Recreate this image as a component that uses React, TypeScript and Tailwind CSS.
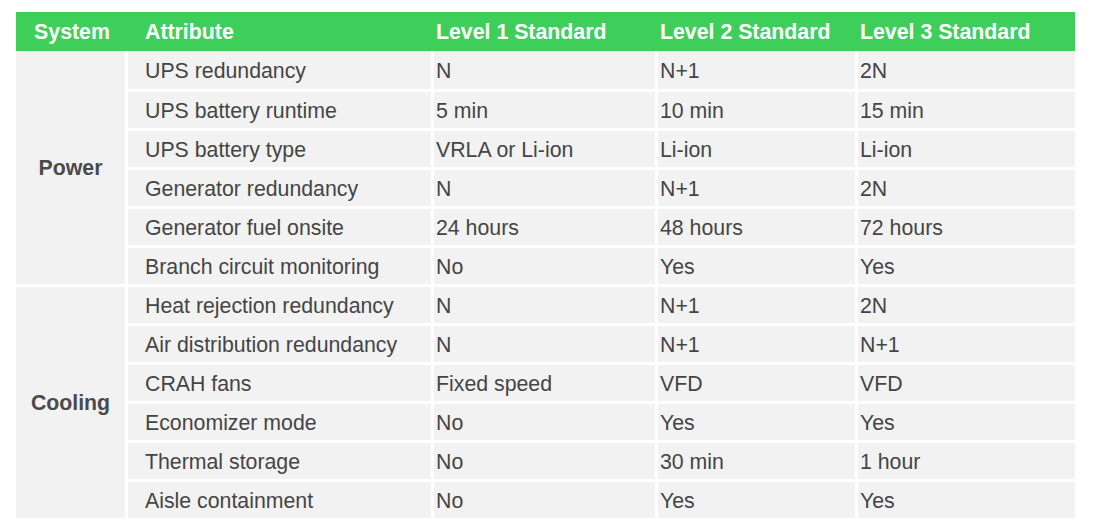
const cols = 'grid grid-cols-[303px_221px_197px_217px] gap-x-[3px]';

type Row = [string, string, string, string];

const power: Row[] = [
  ['UPS redundancy', 'N', 'N+1', '2N'],
  ['UPS battery runtime', '5 min', '10 min', '15 min'],
  ['UPS battery type', 'VRLA or Li-ion', 'Li-ion', 'Li-ion'],
  ['Generator redundancy', 'N', 'N+1', '2N'],
  ['Generator fuel onsite', '24 hours', '48 hours', '72 hours'],
  ['Branch circuit monitoring', 'No', 'Yes', 'Yes'],
];

const cooling: Row[] = [
  ['Heat rejection redundancy', 'N', 'N+1', '2N'],
  ['Air distribution redundancy', 'N', 'N+1', 'N+1'],
  ['CRAH fans', 'Fixed speed', 'VFD', 'VFD'],
  ['Economizer mode', 'No', 'Yes', 'Yes'],
  ['Thermal storage', 'No', '30 min', '1 hour'],
  ['Aisle containment', 'No', 'Yes', 'Yes'],
];

function Section({ name, rows, first }: { name: string; rows: Row[]; first?: boolean }) {
  return (
    <div className="grid grid-cols-[109px_1fr] gap-x-[3px]">
      <div className="bg-[#f2f2f2] flex items-center justify-center pt-[2px] font-bold text-[#4a4a4a]">{name}</div>
      <div className="flex flex-col gap-y-[3px]">
        {rows.map((r, i) => (
          <div key={r[0]} className={`${cols} ${first && i === 0 ? 'h-[38px]' : 'h-[36px]'}`}>
            <div className="bg-[#f2f2f2] flex items-center pl-[17px] pt-[4px]">{r[0]}</div>
            {r.slice(1).map((v, j) => (
              <div key={j} className="bg-[#f2f2f2] flex items-center pl-[2px] pt-[4px]">{v}</div>
            ))}
          </div>
        ))}
      </div>
    </div>
  );
}

export default function App() {
  return (
    <div className="min-h-screen bg-white pt-[12px] pl-[16px] font-['Liberation_Sans',Arial,sans-serif] text-[21.3px] text-[#454545]">
      <div className="w-[1059px] flex flex-col gap-y-[3px]">
        <div className="grid grid-cols-[109px_303px_221px_197px_217px] gap-x-[3px] h-[39px] bg-[#3ecf5b] text-white font-bold -mb-[3px]">
          <div className="flex items-center justify-center pl-[3px] pt-[3px]">System</div>
          <div className="flex items-center pl-[17px] pt-[3px]">Attribute</div>
          <div className="flex items-center pl-[2px] pt-[3px]">Level 1 Standard</div>
          <div className="flex items-center pl-[2px] pt-[3px]">Level 2 Standard</div>
          <div className="flex items-center pl-[2px] pt-[3px]">Level 3 Standard</div>
        </div>
        <Section name="Power" rows={power} first />
        <Section name="Cooling" rows={cooling} />
      </div>
    </div>
  );
}
